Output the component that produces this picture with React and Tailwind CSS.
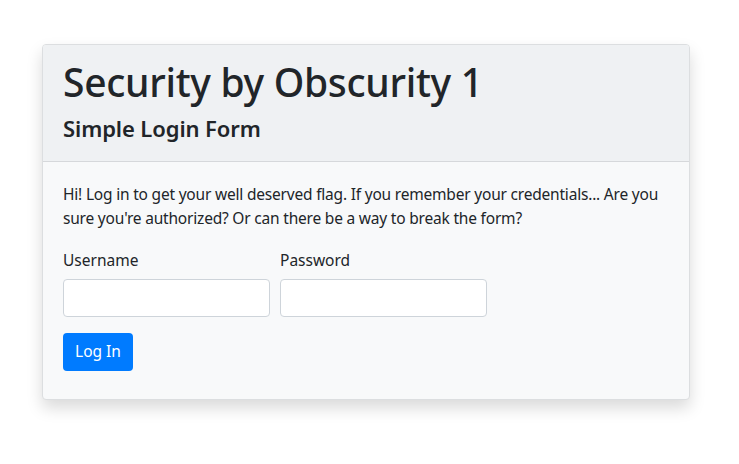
export default function App() {
  return (
    <div
      className="min-h-[464px] bg-white pt-[44px] pl-[42px] text-[#212529]"
      style={{ fontFamily: '"Noto Sans", "Open Sans", sans-serif' }}
    >
      <div className="w-[648px] overflow-hidden rounded-[4px] border border-[#dcdee0] bg-[#f8f9fa] shadow-[0_8px_16px_rgba(0,0,0,0.15)]">
        {/* Header */}
        <div className="border-b border-[#d6d8db] bg-[#eff1f3] px-5 pt-[13px] pb-[18px]">
          <h1 className="text-[39px] font-medium leading-[48px] tracking-[-0.3px]">Security by Obscurity 1</h1>
          <h4 className="mt-[8px] text-[22px] font-semibold leading-[29px] tracking-[-0.1px]">Simple Login Form</h4>
        </div>

        {/* Body */}
        <div className="px-5 pt-5 pb-7">
          <p className="text-[15.5px] leading-6 tracking-[-0.2px]">
            Hi! Log in to get your well deserved flag. If you remember your credentials... Are you sure you're
            authorized? Or can there be a way to break the form?
          </p>

          <div className="mt-[18px] flex gap-[10px]">
            <div className="flex w-[207px] flex-col">
              <label className="text-[15.5px] leading-6">Username</label>
              <input
                type="text"
                className="mt-[7px] h-[38px] rounded-[4px] border border-[#ced4da] bg-white px-3 outline-none"
              />
            </div>
            <div className="flex w-[207px] flex-col">
              <label className="text-[15.5px] leading-6">Password</label>
              <input
                type="password"
                className="mt-[7px] h-[38px] rounded-[4px] border border-[#ced4da] bg-white px-3 outline-none"
              />
            </div>
          </div>

          <button className="mt-4 h-[38px] w-[70px] rounded-[4px] bg-[#007bff] text-[15.5px] text-white">
            Log In
          </button>
        </div>
      </div>
    </div>
  );
}
